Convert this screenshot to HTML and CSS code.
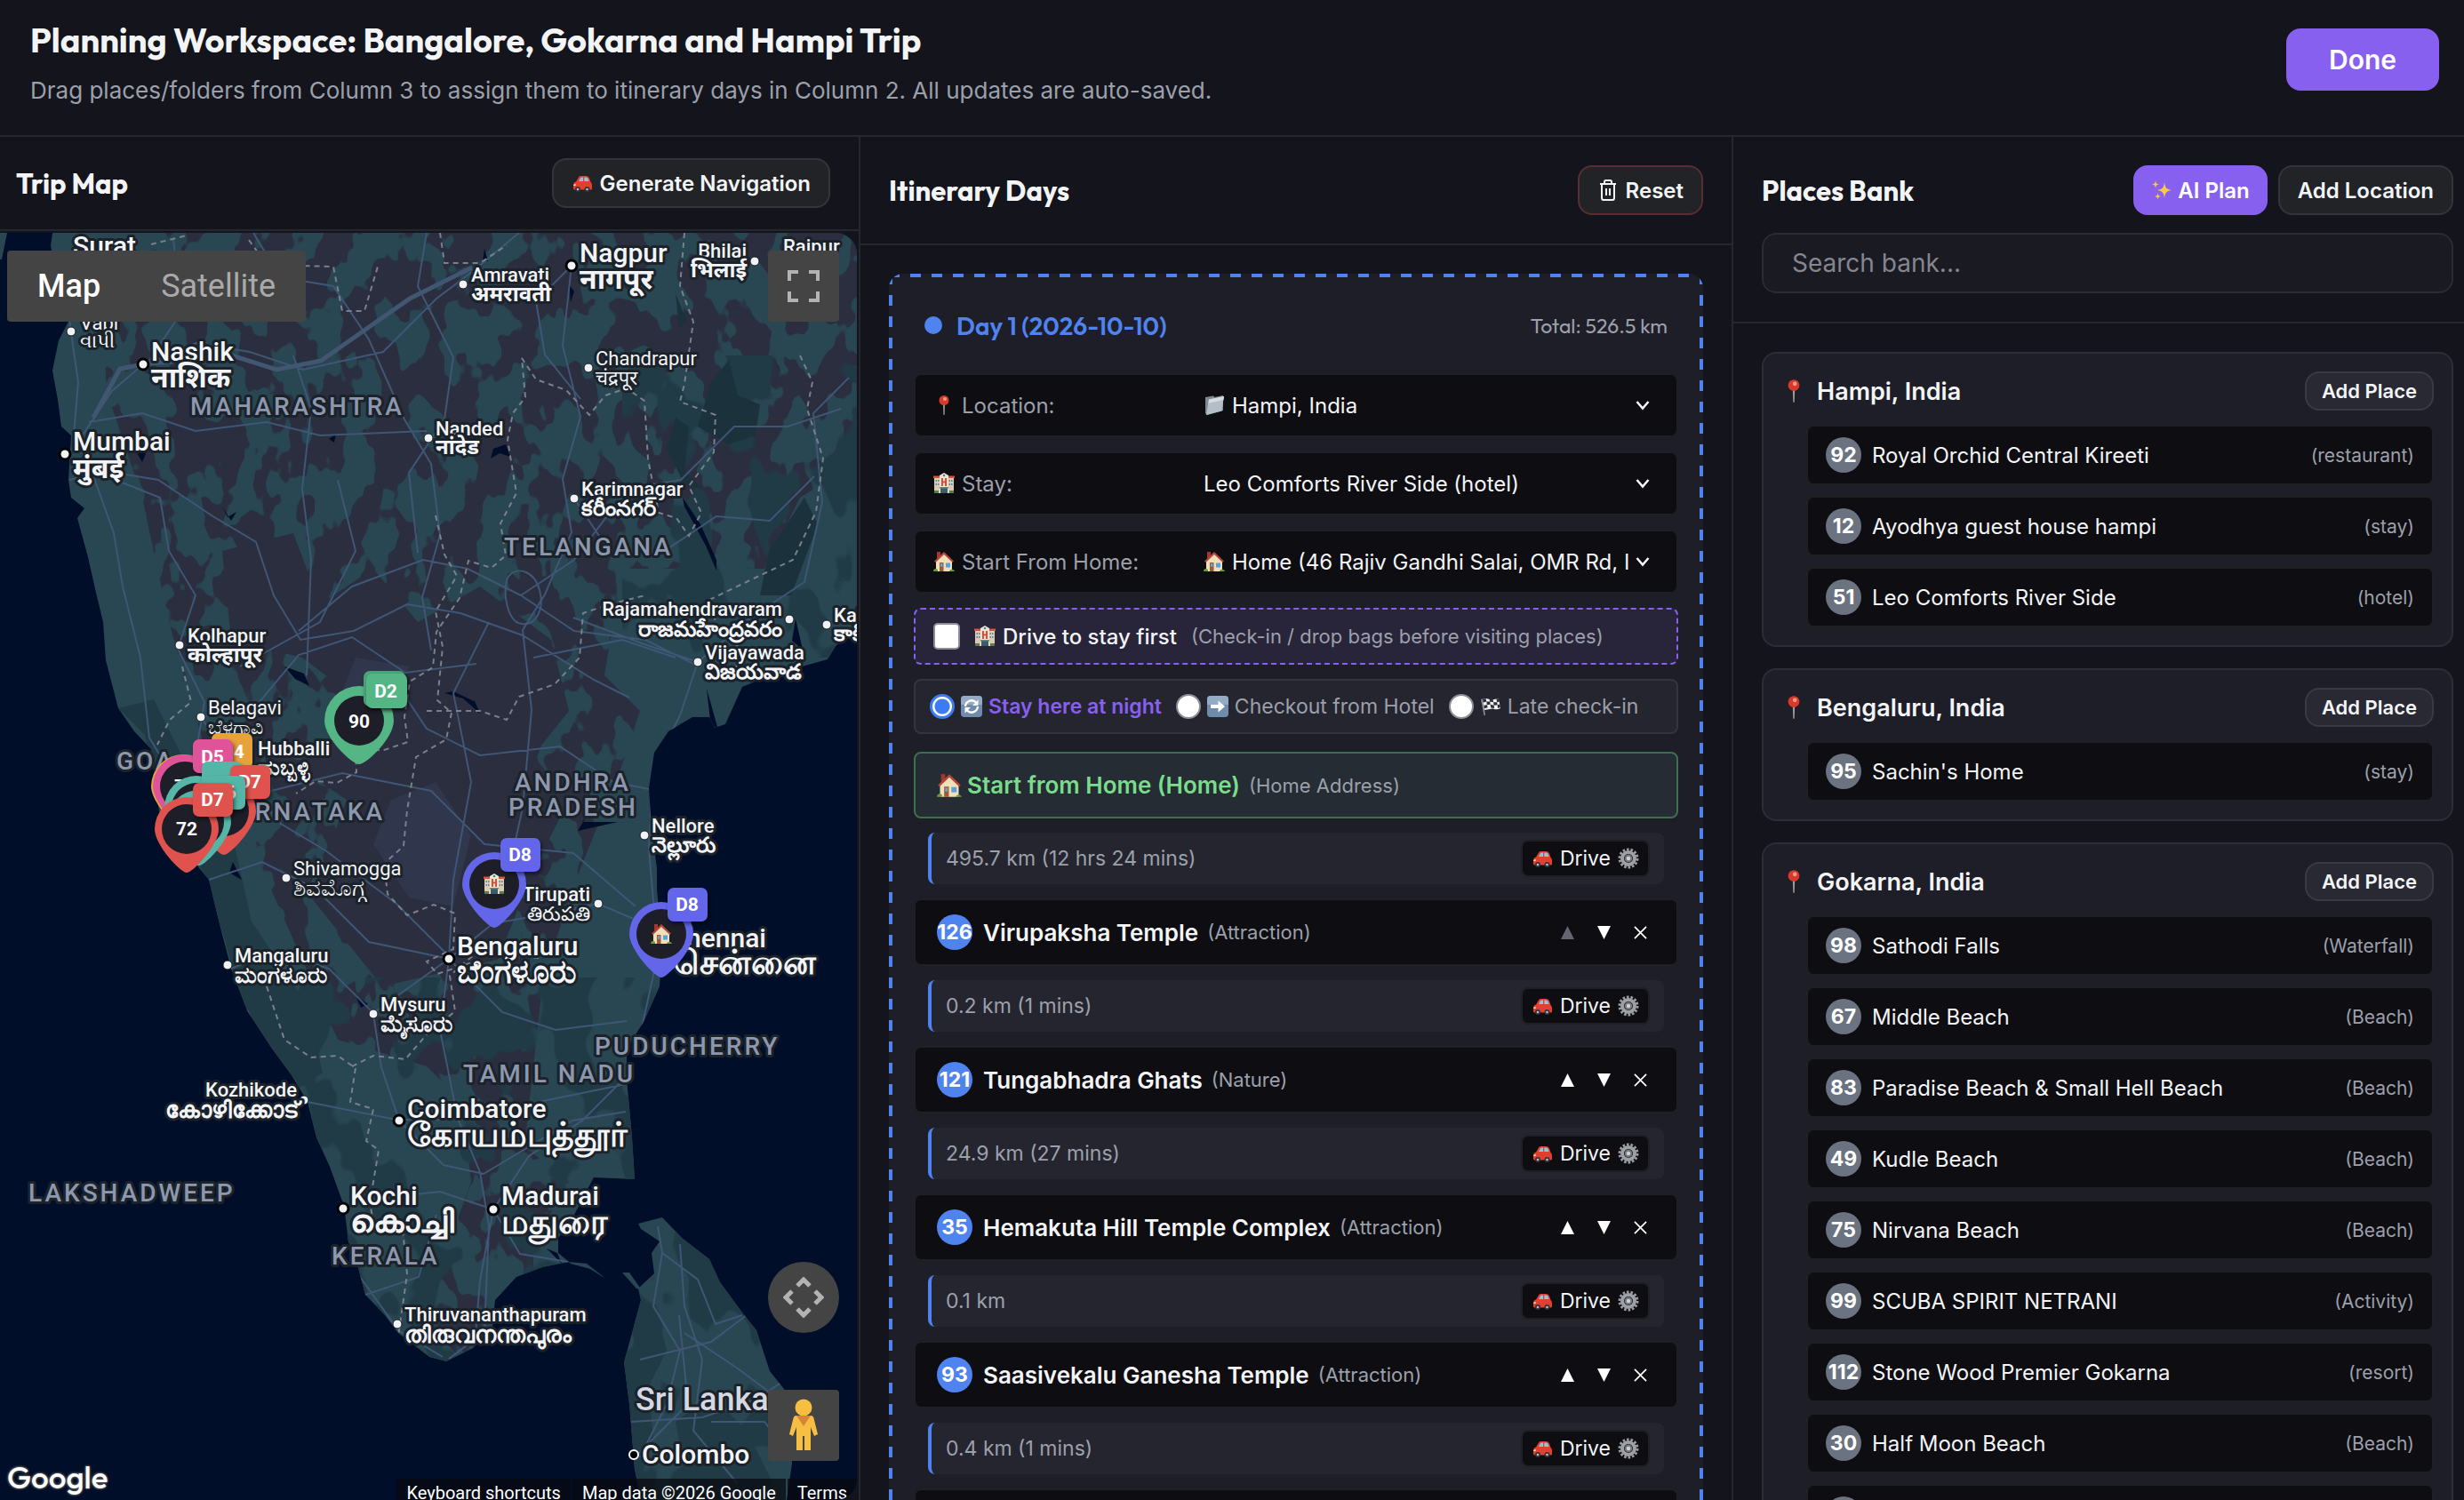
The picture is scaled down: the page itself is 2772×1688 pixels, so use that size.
FILE: index.html
```html
<!DOCTYPE html>
<html lang="en">
<head>
<meta charset="utf-8">
<title>Planning Workspace</title>
<link rel="stylesheet" href="styles.css">
</head>
<body>
<svg class="sprite" aria-hidden="true">
  <symbol id="i-car" viewBox="0 0 24 24">
    <path d="M2 15c0-3 1-4 3-4.500L8 5.500C8.500 4.500 9.500 4 11 4h5c2 0 3.500 1 4.200 3l1.300 4c1 .8 1.500 2 1.500 3.500V18c0 1-.6 1.500-1.500 1.500H4C2.700 19.500 2 19 2 17.500z" fill="#e0402f"/>
    <path d="M8 10l2-3.800c.3-.5.8-.7 1.500-.7H13V10zM14.300 5.500H16c1.300 0 2.200.6 2.700 1.800L19.500 10h-5.200z" fill="#8fc4d8"/>
    <circle cx="7" cy="19" r="3" fill="#33343a"/><circle cx="7" cy="19" r="1.300" fill="#b9bcc4"/>
    <circle cx="17.500" cy="19" r="3" fill="#33343a"/><circle cx="17.500" cy="19" r="1.300" fill="#b9bcc4"/>
    <path d="M2.600 13.500l2.400-.3-.6 1.800H2.200z" fill="#ffe9a8"/>
  </symbol>
  <symbol id="i-pin" viewBox="0 0 24 24">
    <path d="M11 11h2l-.4 12h-1.200z" fill="#a39a92"/>
    <circle cx="12" cy="6.500" r="5.500" fill="#d8392c"/><circle cx="13" cy="5" r="2" fill="#f39a8c"/>
  </symbol>
  <symbol id="i-folder" viewBox="0 0 24 24">
    <path d="M2 3l9-1.500L12.500 3 22 1v17L4 23l-2-2z" fill="#7e8994"/><path d="M6 5.500L23 2 20.500 18.500 3 23z" fill="#b4bec8"/><path d="M6 5.500L23 2 22.400 6 5.300 10z" fill="#d5dce2"/>
  </symbol>
  <symbol id="i-hotel" viewBox="0 0 24 24">
    <path d="M1 5h7v18H1zM16 5h7v18h-7z" fill="#d9cbb5"/><path d="M0 3.500h8V6H0zM16 3.500h8V6h-8z" fill="#d2573a"/>
    <path d="M7 3l5-3 5 3v20H7z" fill="#f1e6d4"/><circle cx="12" cy="3" r="1.300" fill="#4b7fa0"/>
    <path d="M9 6h1.900v3.400h2.200V6H15v9h-1.900v-3.800h-2.200V15H9z" fill="#e2452f"/>
    <path d="M2.500 8h1.500v2H2.500zM5 8h1.500v2H5zM2.500 12h1.500v2H2.500zM5 12h1.500v2H5zM17.500 8H19v2h-1.500zM20 8h1.500v2H20zM17.500 12H19v2h-1.500zM20 12h1.500v2H20z" fill="#6b8798"/>
    <path d="M8 17h8v6H8z" fill="#3d5c66"/><path d="M7 16h10v1.500H7z" fill="#5f8f80"/><path d="M1 20h5v3H1zM18 20h5v3h-5z" fill="#5c7d48"/>
  </symbol>
  <symbol id="i-home" viewBox="0 0 24 24">
    <path d="M4 1h4v7H4z" fill="#a4382e"/><path d="M3 11l9-8 9 8v12H3z" fill="#f0dfb8"/>
    <path d="M12 1l11 10.500-1.500 1.500L12 4 2.500 13 1 11.500z" fill="#b5473a"/>
    <path d="M7 13h4.500v10H7z" fill="#9b5b34"/><path d="M8 14.200h2.500v3.500H8z" fill="#6da7cf"/><path d="M14 13.500h5v5h-5z" fill="#5aa0dc"/>
    <path d="M0 23c0-3 3-4 5-2v2zM18 23c1-3 5-3 6 0z" fill="#6a9a3e"/>
  </symbol>
  <symbol id="i-cycle" viewBox="0 0 24 24">
    <rect width="24" height="24" rx="4" fill="#6f8cab"/><path d="M4 0h16a4 4 0 0 1 4 4v6H0V4a4 4 0 0 1 4-4" fill="#93abc4"/>
    <path d="M5 12a7 7 0 0 1 12-4.500M19 12a7 7 0 0 1-12 4.500" fill="none" stroke="#fff" stroke-width="2.400"/>
    <path d="M19.500 4.500V11h-6.500zM4.500 19.500V13H11z" fill="#fff"/>
  </symbol>
  <symbol id="i-right" viewBox="0 0 24 24">
    <rect width="24" height="24" rx="4" fill="#6f8cab"/><path d="M4 0h16a4 4 0 0 1 4 4v6H0V4a4 4 0 0 1 4-4" fill="#93abc4"/>
    <path d="M4 10h8.500V5.500L20 12l-7.500 6.500V14H4z" fill="#fff"/>
  </symbol>
  <symbol id="i-flag" viewBox="0 0 24 24">
    <path d="M1 4l2-.5L6 22H4.500z" fill="#8b8f96"/><path d="M3 4c5-3 8 2 13 0l5-1 2 11c-5 3-8-1-12 1l-6 1z" fill="#eef0f2"/>
    <path d="M3 4l3.500-1 .8 3.500-3.600 1zM10.500 3l4 1 .6 3.300-4-.8zM18.500 3.500l3-.5.6 3.500-3 .7zM7.300 6.500l3.800-.2.6 3.500-3.800.4zM15.100 7.300l4-.2.5 3.200-4 .4zM4.400 10.800l3.500-.6.7 3-3.600 1zM11.700 9.800l3.900.9.5 3.200-3.800-.5zM19.600 10.300l2.800-.8.5 3.500-2.800 1z" fill="#2c2e33"/>
  </symbol>
  <symbol id="i-spark" viewBox="0 0 24 24">
    <path d="M15 3c.8 6 2 8 8 9-6 1-7.200 3-8 9-.8-6-2-8-8-9 6-1 7.200-3 8-9zM5 1c.4 3 1 4 4 4.500C6 6 5.400 7 5 10 4.600 7 4 6 1 5.500 4 5 4.600 4 5 1zM7.500 15c.4 3 1 3.500 3.500 4-2.500.5-3.100 1-3.500 4-.4-3-1-3.500-3.500-4 2.500-.5 3.100-1 3.500-4z" fill="#fbc94a"/>
  </symbol>
  <symbol id="i-gear" viewBox="0 0 24 24">
    <circle cx="12" cy="12" r="10" fill="none" stroke="#9a9da3" stroke-width="3" stroke-dasharray="2.600 1.880"/>
    <circle cx="12" cy="12" r="7" fill="none" stroke="#9da0a6" stroke-width="4"/><circle cx="12" cy="12" r="4.400" fill="#77797f"/><circle cx="12" cy="12" r="2.200" fill="#d0d2d6"/>
  </symbol>
  <symbol id="i-chev" viewBox="0 0 16 12"><path d="M1.500 2L8 9.500 14.500 2" fill="none" stroke="#f3f4f6" stroke-width="2.600"/></symbol>
  <symbol id="i-up" viewBox="0 0 14 14"><path d="M7 0l7 14H0z" fill="currentColor"/></symbol>
  <symbol id="i-down" viewBox="0 0 14 14"><path d="M7 14L0 0h14z" fill="currentColor"/></symbol>
  <symbol id="i-x" viewBox="0 0 16 16"><path d="M1 1l14 14M15 1L1 15" fill="none" stroke="currentColor" stroke-width="1.800"/></symbol>
  <symbol id="i-trash" viewBox="0 0 20 24"><path d="M1 5h18M6 5V2.500C6 1.700 6.700 1 7.500 1h5c.8 0 1.500.7 1.500 1.500V5M3 5v15.500C3 22 3.800 23 5 23h10c1.200 0 2-1 2-2.500V5M8 10v8M12 10v8" fill="none" stroke="currentColor" stroke-width="2"/></symbol>
</svg>

<header class="topbar">
  <div>
    <h1>Planning Workspace: Bangalore, Gokarna and Hampi Trip</h1>
    <p>Drag places/folders from Column 3 to assign them to itinerary days in Column 2. All updates are auto-saved.</p>
  </div>
  <button class="done" type="button">Done</button>
</header>

<main class="columns">
  <section class="col col-map">
    <div class="map-head">
      <h2>Trip Map</h2>
      <button class="btn" type="button"><svg class="e"><use href="#i-car"/></svg>Generate Navigation</button>
    </div>
    <div class="map">
      <svg class="map-art" viewBox="0 262 964 1426" preserveAspectRatio="xMinYMin slice" role="img" aria-label="Map of southern India">
        <defs>
          <filter id="fields" x="0" y="0" width="100%" height="100%" color-interpolation-filters="sRGB">
            <feTurbulence type="fractalNoise" baseFrequency="0.026 0.017" numOctaves="3" seed="7"/>
            <feColorMatrix values="0 0 0 0 .165 0 0 0 0 .18 0 0 0 0 .247 40 0 0 0 -19.200"/>
          </filter>
          <filter id="forest" x="0" y="0" width="100%" height="100%" color-interpolation-filters="sRGB">
            <feTurbulence type="fractalNoise" baseFrequency="0.016 0.010" numOctaves="3" seed="21"/>
            <feColorMatrix values="0 0 0 0 .125 0 0 0 0 .23 0 0 0 0 .275 30 0 0 0 -16.500"/>
          </filter>
          <clipPath id="mainland"><path d="M59 262L57 277 77 362 66 383 59 417 65 450 69 480 80 490 77 540 80 560 95 572 87 583 99 627 108 667 116 700 119 743 133 797 151 823 170 843 179 913 210 960 235 990 247 1040 260 1090 278 1137 306 1180 328 1210 346 1240 356 1280 371 1313 387 1357 392 1397 402 1423 411 1457 433 1480 448 1500 483 1527 502 1532 532 1517 554 1493 557 1463 581 1437 610 1426 640 1420 628 1410 628 1393 646 1367 668 1325 714 1327 711 1280 705 1213 705 1180 724 1150 742 1110 745 1067 739 1000 739 977 733 933 730 887 736 847 752 823 779 807 798 807 804 819 816 815 835 773 866 760 931 742 940 727 964 708V262Z"/></clipPath>
          <clipPath id="lanka"><path d="M718 1377L745 1370 767 1393 798 1417 810 1443 835 1477 851 1497 866 1543 882 1563 891 1597 891 1647 885 1688H721L714 1653 708 1580 702 1533 711 1500 721 1463 718 1450 736 1433 733 1410 742 1397 721 1383Z"/></clipPath>
          <clipPath id="plateau"><path d="M110 262H964V520L900 560 860 640 700 640 680 760 720 800 700 860 640 1010 610 1110 590 1290 640 1330 600 1400 600 1440 560 1460 520 1530 490 1500 490 1440 530 1330 520 1240 480 1200 380 1170 340 1080 300 990 260 920 230 840 190 700 160 560 120 440Z"/></clipPath>
        </defs>
        <rect y="262" width="964" height="1426" fill="#000e29"/>
        <g clip-path="url(#mainland)">
          <rect y="262" width="964" height="1300" fill="#284752"/>
          <g clip-path="url(#plateau)">
            <path d="M250 620L330 600 360 680 420 640 470 700 540 660 620 720 640 800 600 850 640 900 600 980 560 1080 430 1110 350 1010 390 900 330 860 420 800 340 740 260 720Z" fill="#2a2e3f"/>
            <rect y="262" width="964" height="1300" filter="url(#fields)"/>
            <path d="M440 900l50-20 40 60-20 80-50-10-40-60zM400 740l60 10-20 60-60-20z" fill="#30364b"/>
          </g>
          <rect x="0" y="1100" width="964" height="440" filter="url(#forest)"/>
          <rect x="700" y="400" width="264" height="340" filter="url(#forest)"/>
          <path d="M133 797l30 30 20 90 40 50 30 90 20 80 60 90 30-20-20-80-60-90-20-90-60-100-30-60z" fill="#203b46"/>
          <path d="M800 430l20-25 10 40 25 10-5 35-30 10-35-20zM760 470l15 10-5 50 20 20-20-5-20-40zM905 560l-40 60-10 50 35 0 30-80zM760 330l12 30-8 10z" fill="#1b323d"/>
          <g fill="#000e29">
            <path d="M768 560l20 30 18 40v12l-12-28-24-44zM895 696l8 35-12-10zM795 775l14 50-10-14zM555 505l14-5 5 14-12-4-10 6zM250 570l6 12 10-6-6 10zM370 494l8-6-2 10zM500 780l35 10-25-12zM520 785l20 18-6-14zM655 925l40 0-45 10 12-20zM320 750l22 8 6 14-16-8zM545 280l4 14h-6zM640 320l6 8-4 12zM262 970l10 20-14-8zM160 500l5 8-5 12-8-14zM400 1120l14 10-8 4zM615 1405l12 5 5 12z"/>
          </g>
        </g>
        <path d="M0 262h8l-6 30H0zM640 1420l20 2 18 14 2 2-16-10-22-6zM700 1432l16 18 6 2-14-20z" fill="#284752"/>
        <g clip-path="url(#lanka)">
          <rect x="690" y="1360" width="220" height="328" fill="#284752"/>
          <rect x="690" y="1360" width="220" height="328" filter="url(#forest)"/>
          <path d="M715 1500l25-20 10 40-20 40 5 60-20 60-10-120zM760 1600l40-30 40 40 30 60-60 18-40-30z" fill="#203b46"/>
        </g>
        <g clip-path="url(#mainland)">
          <g class="roads">
            <path d="M78 360l10 70-5 60 20 40 25 70 10 60 20 80 10 90 30 50M86 500l40-60 35-30 60-24 60 10 60 20 90-20 60-60 40-30 60-50 50-30 130-8M100 475l60-10 60 20 80-10 60 15 120-5M78 540l40-10 60 10 60 40 50 30 20 60 30 50 60-10 60-30 60 10 70 25 80 50 40 20M130 540l50 20 10 60 30 50-20 60 30 60-10 60M165 410l40-60-10-80M285 262l30 50 60 10 40 60 40 90 30 50 10 80-20 70 10 60M330 400l20 60-10 90 10 80-5 130M480 262l-10 60 40 80-10 70-40 60 10 90M643 299l-10 90 20 80-20 70 10 60-30 70-25 40 10 90-10 110-20 90M643 299l-40 40 10 60 40 50M646 561l40 60 60 0 60-40 60 5 50-50M586 670l60-40 60-80 60-10 60-60 60 0 60-20M586 670l60 40 80 10 60 30M586 670l-60-30-50-10-80 30-60 50M600 740l100-20 60 20M785 745l-60-20-80-30M785 745l60-50 60-40 20-90-10-100 40-40M785 745l-20 60-30 60-5 90 10 120-20 90M226 807l60-10 50-60 60-20 60 40 80-10M226 807l40 60 50 60 50 30 80 60 60 60M205 880l100 10 80-20 100 20 60 60 100 10 70 60M235 990l60-20 60 30 60 60 90 19M260 1090l50-20 60 20 50 50 85-61M505 1079l50-40 60-10 58-12 70 30M505 1079l60 60 60 20 80-10M505 1079l-10 80 20 100 25 60 10 60-5 120-40 30M278 1137l30 60 30 80 40 60 20 90 50 70 50 30M346 1240l100 20 60 0 100-20 98-20M449 1261l50 50 45 10 100-60 60-10M449 1261l-20-60-9-60M555 1361l40-60 60-40 50-50M555 1361l30 50 60 10M555 1361l-60-20-90 10M555 1361l-15 80-5 60M411 1457l60-20 20-70M550 700l-40 80 20 100-20 110-5 89M440 760l40 60 60 30 90-10 60 40 50 10M380 540l20 80-40 80-90 50"/>
            <path d="M571 650c10-14 30-8 36 14s-4 40-20 38-22-34-16-52z"/>
          </g>
          <path class="roads wide" d="M105 470l30-55 26-5 100-10 50 16 50-10 100-70 70-35"/>
          <g class="borders">
            <path d="M170 275l40-10M280 270l20 28 75 2 10 50 25 0 15-50M495 262l5 34 40 0 30-20M770 262l-5 60 15 40-10 70-5 20 40 15-2 42-28 38 14 30-14 26-14-20-20-6-12-60-4-66-20-14-24 8-18 22-26-28-34-12-16-24 4 44-14 18-6 30 10 60-18 34 6 36-16 14-26-8-10 42-26 38-4 40-26 16-6 40 4 28-30 10-22-6-8-14 2 44-22 12-24-2-22 14"/>
            <path d="M900 400l14 30-6 30 18 56-8 60-26 54-42 20-50 24 6 32 34 30-20 24M490 580l10 44 14 24-24 40 8 40-6 60 16 14-6 30-34 20-10 60-4 40-22 20 4 34 22 24 30-12 24 10-2 40-30 14 12 14 36-12 18 10M480 800l60 0 30 10 14-26 40-14 28-30 4-50 30-10 40-10M205 750l10 40-24 20-14 28M300 1110l20 60 30 20 30-2 20 14-6 38 26 8-8 36 14 10-10 60 6 30 30-10 6 60-10 70M396 1200l24-12 36 4 26-30 30-24-6-40 30-26 70 6"/>
          </g>
        </g>
        <path class="roads" clip-path="url(#lanka)" d="M740 1380l5 30 40 30 20 50 30-10M745 1410l-10 60 30 50-15 60-30 60M714 1640l60-60-10-100M765 1400l5 70 20 60-10 80 50 60M720 1530l80-20 40-30M710 1600l80-5 60-20 30-20M770 1500l60 40 40 30M800 1600l60 0 30 40"/>
        <g class="dots">
          <circle cx="849" cy="294" r="5"/><circle cx="521" cy="320" r="5"/><circle cx="80" cy="373" r="5"/><circle cx="662" cy="414" r="5"/><circle cx="482" cy="493" r="5"/><circle cx="646" cy="561" r="5"/><circle cx="888" cy="697" r="5"/><circle cx="930" cy="703" r="5"/><circle cx="202" cy="726" r="5"/><circle cx="785" cy="745" r="5"/><circle cx="226" cy="807" r="5"/><circle cx="725" cy="940" r="5"/><circle cx="322" cy="988" r="5"/><circle cx="673" cy="1017" r="5"/><circle cx="256" cy="1086" r="5"/><circle cx="420" cy="1141" r="5"/><circle cx="342" cy="1238" r="5"/><circle cx="447" cy="1490" r="5"/>
          <g class="major"><circle cx="643" cy="299" r="6"/><circle cx="161" cy="410" r="6"/><circle cx="73" cy="511" r="6"/><circle cx="505" cy="1079" r="6"/><circle cx="449" cy="1261" r="6"/><circle cx="386" cy="1360" r="6"/><circle cx="555" cy="1361" r="6"/><circle cx="713" cy="1637" r="5" class="ring"/></g>
        </g>
        <g class="lbl state">
          <text x="214" y="467">MAHARASHTRA</text><text x="567" y="625">TELANGANA</text><text x="131" y="866">GOA</text><text x="433" y="923" text-anchor="end">KARNATAKA</text><text x="579" y="890">ANDHRA</text><text x="572" y="918">PRADESH</text><text x="669" y="1187">PUDUCHERRY</text><text x="521" y="1218">TAMIL NADU</text><text x="32" y="1352">LAKSHADWEEP</text><text x="373" y="1423">KERALA</text>
        </g>
        <g class="lbl city">
          <text x="82" y="287">Surat</text><text x="652" y="295">Nagpur</text><text x="652" y="325" class="hi">नागपूर</text><text x="170" y="406">Nashik</text><text x="170" y="436" class="hi">नाशिक</text><text x="82" y="507">Mumbai</text><text x="82" y="538" class="hi">मुंबई</text><text x="514" y="1075">Bengaluru</text><text x="514" y="1106" class="dr">ಬೆಂಗಳೂರು</text><text x="862" y="1066" text-anchor="end">Chennai</text><text x="757" y="1096" class="ta">சென்னை</text><text x="458" y="1258">Coimbatore</text><text x="458" y="1290" class="ta">கோயம்புத்தூர்</text><text x="394" y="1356">Kochi</text><text x="394" y="1387" class="dr">കൊച്ചി</text><text x="564" y="1356">Madurai</text><text x="564" y="1388" class="ta">மதுரை</text><text x="722" y="1647">Colombo</text>
        </g>
        <g class="lbl town">
          <text x="840" y="290" text-anchor="end">Bhilai</text><text x="840" y="312" text-anchor="end" class="hi">भिलाई</text><text x="881" y="285">Raipur</text><text x="530" y="317">Amravati</text><text x="530" y="339" class="hi">अमरावती</text><text x="490" y="490">Nanded</text><text x="490" y="511" class="hi">नांदेड</text><text x="654" y="558">Karimnagar</text><text x="654" y="580" class="hi">కరీంనగర్</text><text x="880" y="693" text-anchor="end">Rajamahendravaram</text><text x="880" y="716" text-anchor="end" class="hi">రాజమహేంద్రవరం</text><text x="938" y="700">Kakinada</text><text x="938" y="721" class="hi">కాకినాడ</text><text x="211" y="723">Kolhapur</text><text x="211" y="745" class="hi">कोल्हापूर</text><text x="793" y="742">Vijayawada</text><text x="793" y="764" class="hi">విజయవాడ</text><text x="290" y="850">Hubballi</text><text x="290" y="872" class="hi">ಹುಬ್ಬಳ್ಳಿ</text><text x="733" y="937">Nellore</text><text x="733" y="959" class="hi">నెల్లూరు</text><text x="664" y="1014" text-anchor="end">Tirupati</text><text x="664" y="1036" text-anchor="end">తిరుపతి</text><text x="264" y="1083">Mangaluru</text><text x="264" y="1106" class="dr">ಮಂಗಳೂರು</text><text x="428" y="1138">Mysuru</text><text x="428" y="1161" class="dr">ಮೈಸೂರು</text><text x="334" y="1234" text-anchor="end">Kozhikode</text><text x="336" y="1258" text-anchor="end" class="dr">കോഴിക്കോട്</text><text x="455" y="1487">Thiruvananthapuram</text><text x="455" y="1511" class="dr">തിരുവനന്തപുരം</text>
        </g>
        <g class="lbl town thin">
          <text x="90" y="371">Vapi</text><text x="90" y="391">વાપી</text><text x="670" y="411">Chandrapur</text><text x="670" y="433">चंद्रपूर</text><text x="234" y="804">Belagavi</text><text x="234" y="826">ಬೆಳಗಾವಿ</text><text x="330" y="985">Shivamogga</text><text x="330" y="1008" class="dr">ಶಿವಮೊಗ್ಗ</text>
        </g>
        <g class="lbl nation"><text x="715" y="1587">Sri Lanka</text></g>

        <g class="pins">
          <g transform="translate(206 885)"><path d="M0 49C-7 49-36 18-36 0A36 36 0 0 1 36 0C36 18 7 49 0 49Z" fill="#e8a23c"/><circle r="28"/><rect x="32" y="-60" width="46" height="40" rx="7" fill="#e8a23c"/><text x="56" y="-32">D4</text></g>
          <g transform="translate(208 885)"><path d="M0 49C-7 49-36 18-36 0A36 36 0 0 1 36 0C36 18 7 49 0 49Z" fill="#df5499"/><circle r="28"/><text y="7">70</text><rect x="9" y="-53" width="45" height="38" rx="7" fill="#df5499"/><text x="31" y="-26">D5</text></g>
          <g transform="translate(221 909)"><path d="M0 49C-7 49-36 18-36 0A36 36 0 0 1 36 0C36 18 7 49 0 49Z" fill="#55b5a6"/><circle r="28"/><rect x="6" y="-52" width="45" height="38" rx="7" fill="#55b5a6"/></g>
          <g transform="translate(252 913)"><path d="M0 49C-7 49-36 18-36 0A36 36 0 0 1 36 0C36 18 7 49 0 49Z" fill="#df524d"/><circle r="28"/><rect x="7" y="-52" width="45" height="38" rx="7" fill="#df524d"/><text x="29" y="-26">D7</text></g>
          <g transform="translate(224 925)"><path d="M0 49C-7 49-36 18-36 0A36 36 0 0 1 36 0C36 18 7 49 0 49Z" fill="#55b5a6"/><circle r="28"/><rect x="7" y="-52" width="45" height="38" rx="7" fill="#55b5a6"/><text x="29" y="-26">D6</text></g>
          <g transform="translate(210 933)"><path d="M0 49C-7 49-36 18-36 0A36 36 0 0 1 36 0C36 18 7 49 0 49Z" fill="#df524d"/><circle r="28"/><text y="7">72</text><rect x="7" y="-52" width="45" height="38" rx="7" fill="#df524d"/><text x="29" y="-26">D7</text></g>
          <g transform="translate(404 811)"><path d="M0 49C-8 49-39 20-39 0A39 39 0 0 1 39 0C39 20 8 49 0 49Z" fill="#54b685"/><circle r="28"/><text y="8">90</text><rect x="5" y="-56" width="47" height="40" rx="7" fill="#48a577"/><rect x="8" y="-53" width="46" height="39" rx="7" fill="#54b685"/><text x="30" y="-26">D2</text></g>
          <g transform="translate(556 995)"><path d="M0 49C-7 49-36 18-36 0A36 36 0 0 1 36 0C36 18 7 49 0 49Z" fill="#6366e8"/><circle r="28"/><use href="#i-hotel" x="-12" y="-12" width="24" height="24"/><rect x="7" y="-52" width="45" height="38" rx="7" fill="#6366e8"/><text x="29" y="-26">D8</text></g>
          <g transform="translate(744 1051)"><path d="M0 49C-7 49-36 18-36 0A36 36 0 0 1 36 0C36 18 7 49 0 49Z" fill="#6366e8"/><circle r="28"/><use href="#i-home" x="-12" y="-12" width="24" height="24"/><rect x="7" y="-52" width="45" height="38" rx="7" fill="#6366e8"/><text x="29" y="-26">D8</text></g>
        </g>
      </svg>
      <div class="map-type"><button type="button" class="on">Map</button><button type="button">Satellite</button></div>
      <button class="map-tool full" type="button" aria-label="Toggle fullscreen"><svg width="36" height="36" viewBox="0 0 36 36"><path d="M2 12V2h10M24 2h10v10M34 24v10H24M12 34H2V24" fill="none" stroke="#b3b3b3" stroke-width="4"/></svg></button>
      <button class="map-tool pan" type="button" aria-label="Camera controls"><svg width="46" height="46" viewBox="0 0 46 46"><path d="M16 10l7-7 7 7M16 36l7 7 7-7M10 16l-7 7 7 7M36 16l7 7-7 7" fill="none" stroke="#b3b3b3" stroke-width="5"/></svg></button>
      <button class="map-tool peg" type="button" aria-label="Street View"><svg width="34" height="60" viewBox="0 0 34 60"><circle cx="17" cy="10" r="9.500" fill="#f6bf42"/><path d="M9 19h16c2 0 3 1 3.500 3L33 40l-4 2-4-10v26h-7V42h-2v16H9V32L5 42l-4-2 4.500-18C6 20 7 19 9 19z" fill="#f6bf42"/><path d="M9 19h16l-8 12z" fill="#d9843b"/></svg></button>
      <a class="google" href="#">Google</a>
      <div class="map-legal"><button type="button">Keyboard shortcuts</button><span>Map data ©2026 Google</span><a href="#">Terms</a></div>
    </div>
  </section>

  <section class="col col-days">
    <div class="days-head">
      <h2>Itinerary Days</h2>
      <button class="btn danger" type="button"><svg class="e"><use href="#i-trash"/></svg>Reset</button>
    </div>
    <div class="days-body">
      <article class="day">
        <header class="day-head"><span class="day-dot"></span><h3>Day 1 (2026-10-10)</h3><span class="total">Total: 526.5 km</span></header>
        <div class="field"><label for="loc"><svg class="e"><use href="#i-pin"/></svg>Location:</label><div class="pick"><svg class="e"><use href="#i-folder"/></svg><select id="loc"><option>Hampi, India</option></select><svg class="chev"><use href="#i-chev"/></svg></div></div>
        <div class="field"><label for="stay"><svg class="e"><use href="#i-hotel"/></svg>Stay:</label><div class="pick"><select id="stay"><option>Leo Comforts River Side (hotel)</option></select><svg class="chev"><use href="#i-chev"/></svg></div></div>
        <div class="field"><label for="home"><svg class="e"><use href="#i-home"/></svg>Start From Home:</label><div class="pick"><svg class="e"><use href="#i-home"/></svg><select id="home"><option>Home (46 Rajiv Gandhi Salai, OMR Rd, Injambakkam)</option></select><svg class="chev"><use href="#i-chev"/></svg></div></div>
        <label class="stay-first"><input type="checkbox"><svg class="e"><use href="#i-hotel"/></svg><b>Drive to stay first</b><span>(Check-in / drop bags before visiting places)</span></label>
        <div class="night">
          <label class="sel"><input type="radio" name="night" checked><svg class="e"><use href="#i-cycle"/></svg>Stay here at night</label>
          <label><input type="radio" name="night"><svg class="e"><use href="#i-right"/></svg>Checkout from Hotel</label>
          <label><input type="radio" name="night"><svg class="e"><use href="#i-flag"/></svg>Late check-in</label>
        </div>
        <div class="start"><svg class="e big"><use href="#i-home"/></svg><b>Start from Home (Home)</b><span>(Home Address)</span></div>
        <div class="leg"><span>495.7 km (12 hrs 24 mins)</span><button type="button"><svg class="e"><use href="#i-car"/></svg>Drive<svg class="e"><use href="#i-gear"/></svg></button></div>
        <div class="stop"><i>126</i><b>Virupaksha Temple</b><span>(Attraction)</span><div class="acts"><button type="button" aria-label="Up" disabled><svg><use href="#i-up"/></svg></button><button type="button" aria-label="Down"><svg><use href="#i-down"/></svg></button><button type="button" aria-label="Remove"><svg><use href="#i-x"/></svg></button></div></div>
        <div class="leg"><span>0.2 km (1 mins)</span><button type="button"><svg class="e"><use href="#i-car"/></svg>Drive<svg class="e"><use href="#i-gear"/></svg></button></div>
        <div class="stop"><i>121</i><b>Tungabhadra Ghats</b><span>(Nature)</span><div class="acts"><button type="button" aria-label="Up"><svg><use href="#i-up"/></svg></button><button type="button" aria-label="Down"><svg><use href="#i-down"/></svg></button><button type="button" aria-label="Remove"><svg><use href="#i-x"/></svg></button></div></div>
        <div class="leg"><span>24.9 km (27 mins)</span><button type="button"><svg class="e"><use href="#i-car"/></svg>Drive<svg class="e"><use href="#i-gear"/></svg></button></div>
        <div class="stop"><i>35</i><b>Hemakuta Hill Temple Complex</b><span>(Attraction)</span><div class="acts"><button type="button" aria-label="Up"><svg><use href="#i-up"/></svg></button><button type="button" aria-label="Down"><svg><use href="#i-down"/></svg></button><button type="button" aria-label="Remove"><svg><use href="#i-x"/></svg></button></div></div>
        <div class="leg"><span>0.1 km</span><button type="button"><svg class="e"><use href="#i-car"/></svg>Drive<svg class="e"><use href="#i-gear"/></svg></button></div>
        <div class="stop"><i>93</i><b>Saasivekalu Ganesha Temple</b><span>(Attraction)</span><div class="acts"><button type="button" aria-label="Up"><svg><use href="#i-up"/></svg></button><button type="button" aria-label="Down"><svg><use href="#i-down"/></svg></button><button type="button" aria-label="Remove"><svg><use href="#i-x"/></svg></button></div></div>
        <div class="leg"><span>0.4 km (1 mins)</span><button type="button"><svg class="e"><use href="#i-car"/></svg>Drive<svg class="e"><use href="#i-gear"/></svg></button></div>
        <div class="stop"></div>
      </article>
    </div>
  </section>

  <section class="col col-bank">
    <div class="bank-head">
      <div class="bank-title"><h2>Places Bank</h2><button class="btn primary" type="button"><svg class="e"><use href="#i-spark"/></svg>AI Plan</button><button class="btn" type="button">Add Location</button></div>
      <input class="search" type="search" placeholder="Search bank..." aria-label="Search bank">
    </div>
    <div class="bank-body">
      <article class="folder">
        <header><svg class="e big"><use href="#i-pin"/></svg><h3>Hampi, India</h3><button type="button">Add Place</button></header>
        <ul>
          <li><i>92</i><b>Royal Orchid Central Kireeti</b><span>(restaurant)</span></li>
          <li><i>12</i><b>Ayodhya guest house hampi</b><span>(stay)</span></li>
          <li><i>51</i><b>Leo Comforts River Side</b><span>(hotel)</span></li>
        </ul>
      </article>
      <article class="folder">
        <header><svg class="e big"><use href="#i-pin"/></svg><h3>Bengaluru, India</h3><button type="button">Add Place</button></header>
        <ul><li><i>95</i><b>Sachin's Home</b><span>(stay)</span></li></ul>
      </article>
      <article class="folder">
        <header><svg class="e big"><use href="#i-pin"/></svg><h3>Gokarna, India</h3><button type="button">Add Place</button></header>
        <ul>
          <li><i>98</i><b>Sathodi Falls</b><span>(Waterfall)</span></li>
          <li><i>67</i><b>Middle Beach</b><span>(Beach)</span></li>
          <li><i>83</i><b>Paradise Beach &amp; Small Hell Beach</b><span>(Beach)</span></li>
          <li><i>49</i><b>Kudle Beach</b><span>(Beach)</span></li>
          <li><i>75</i><b>Nirvana Beach</b><span>(Beach)</span></li>
          <li><i>99</i><b>SCUBA SPIRIT NETRANI</b><span>(Activity)</span></li>
          <li><i>112</i><b>Stone Wood Premier Gokarna</b><span>(resort)</span></li>
          <li><i>30</i><b>Half Moon Beach</b><span>(Beach)</span></li>
          <li><i></i></li>
        </ul>
      </article>
    </div>
  </section>
</main>
</body>
</html>
```
FILE: styles.css
```css
:root {
  --bg: #14141c;
  --card: #1e1e29;
  --row: #0d0d12;
  --line: #26262e;
  --text: #f3f4f6;
  --muted: #9ca0ab;
  --blue: #4f83f0;
  --purple: #8860f0;
}

* { box-sizing: border-box; }

body {
  margin: 0;
  height: 100vh;
  display: flex;
  flex-direction: column;
  overflow: hidden;
  background: var(--bg);
  color: var(--text);
  font-family: Inter, sans-serif;
  font-size: 24px;
}

h1, h2, h3, p, ul { margin: 0; padding: 0; }
h1, h2, .day h3, .total { font-family: Outfit, Lato, sans-serif; }
h2 { font-size: 31px; font-weight: 700; flex: 1; }
button, input, select { font: inherit; color: inherit; }
button { cursor: pointer; }
b { font-weight: 600; }
i { font-style: normal; }
.sprite { position: absolute; width: 0; height: 0; }
.e { width: 24px; height: 24px; flex: none; }
.e.big { width: 28px; height: 28px; }

/* top bar */
.topbar {
  display: flex;
  justify-content: space-between;
  align-items: flex-start;
  padding: 20px 28px 30px 34px;
  border-bottom: 2px solid var(--line);
}
.topbar h1 { font-size: 38px; line-height: 50px; font-weight: 700; }
.topbar p { margin-top: 12px; font-size: 26px; line-height: 40px; color: var(--muted); }
.done {
  margin-top: 12px;
  height: 70px;
  padding: 0 48px;
  border: 0;
  border-radius: 16px;
  background: var(--purple);
  color: #fff;
  font-size: 30px;
  font-weight: 600;
}

.columns {
  flex: 1;
  min-height: 0;
  display: grid;
  grid-template-columns: 968fr 982fr 822fr;
}
.col { min-width: 0; min-height: 0; display: flex; flex-direction: column; overflow: hidden; }
.col-map, .col-days { border-right: 2px solid var(--line); }

.btn {
  height: 56px;
  padding: 0 20px;
  display: flex;
  align-items: center;
  gap: 8px;
  border: 2px solid #34353a;
  border-radius: 16px;
  background: #222327;
  font-size: 24px;
  font-weight: 600;
}
.btn.danger { border-color: #5a2d33; }
.btn.primary { gap: 6px; padding: 0 18px; border-color: var(--purple); background: var(--purple); color: #fff; }

/* map */
.map-head { display: flex; align-items: center; padding: 24px 32px 24px 18px; border-bottom: 2px solid var(--line); }
.map { position: relative; flex: 1; min-height: 0; margin-top: 2px; margin-right: 2px; border-radius: 0 24px 24px 0; overflow: hidden; background: #000e29; }
.map-art { display: block; width: 100%; height: 100%; }
.roads { fill: none; stroke: #3f5674; stroke-width: 2; }
.roads.wide { stroke-width: 5; stroke: #405671; }
.borders { fill: none; stroke: #78808b; stroke-width: 2; stroke-dasharray: 6 5; }
.dots circle { fill: #f1f2f6; stroke: #15171c; stroke-width: 1; }
.dots .major circle { stroke: #000; stroke-width: 3; }
.dots .major .ring { fill: #000; stroke: #fff; stroke-width: 2; }
.lbl { fill: #f3f4f8; stroke: #1b2229; stroke-width: 6; stroke-linejoin: round; paint-order: stroke; font-family: Roboto, "Noto Sans", sans-serif; font-weight: 500; }
.state { font-size: 28px; letter-spacing: 3px; fill: #8d97ad; }
.city { font-size: 30px; }
.city .hi { font-size: 32px; font-weight: 700; }
.city .dr { font-size: 36px; font-weight: 700; }
.city .ta { font-size: 38px; font-weight: 700; }
.town { font-size: 22px; }
.town .hi { font-size: 24px; }
.town .dr { font-size: 26px; }
.town:not(.thin) .hi, .town:not(.thin) .dr { font-weight: 700; }
.thin { font-weight: 400; }
.nation { font-size: 36px; fill: #d5d8e0; }
.pins circle { fill: #1e1e29; }
.pins text { fill: #fff; font-family: Roboto, sans-serif; font-size: 21px; font-weight: 700; text-anchor: middle; }
.pins rect { filter: drop-shadow(2px 3px 2px rgba(0, 0, 0, .5)); }
.map-type { position: absolute; left: 8px; top: 20px; display: flex; height: 80px; border-radius: 4px; overflow: hidden; background: #444; }
.map-type button { padding: 0 34px; border: 0; background: none; font-family: Roboto, sans-serif; font-size: 36px; color: #aaa; }
.map-type .on { color: #fff; font-weight: 500; }
.map-tool { position: absolute; right: 20px; width: 80px; height: 80px; padding: 0; display: grid; place-items: center; border: 0; border-radius: 4px; background: #444; }
.full { top: 20px; }
.pan { bottom: 188px; border-radius: 50%; }
.peg { bottom: 44px; }
.google { position: absolute; left: 8px; bottom: 4px; color: #fff; font-family: Outfit, Lato, sans-serif; font-size: 35px; font-weight: 500; line-height: 44px; text-decoration: none; text-shadow: 0 0 3px #555, 0 0 3px #555, 0 0 3px #555; }
.map-legal { position: absolute; right: 0; bottom: -6px; display: flex; gap: 2px; font-family: Roboto, sans-serif; font-size: 20px; line-height: 28px; }
.map-legal > * { padding: 2px 11px 0; border: 0; background: rgba(8, 10, 16, .75); color: #fff; text-decoration: none; }

/* itinerary */
.days-head { display: flex; align-items: center; padding: 32px; border-bottom: 2px solid var(--line); }
.days-body { flex: 1; min-height: 0; overflow: hidden; padding: 32px; }
.day {
  --dash: var(--blue) 0 12px, transparent 12px 24px;
  padding: 24px;
  border: 4px solid transparent;
  border-radius: 16px;
  background:
    repeating-linear-gradient(90deg, var(--dash)) top / 100% 4px no-repeat border-box,
    repeating-linear-gradient(90deg, var(--dash)) bottom / 100% 4px no-repeat border-box,
    repeating-linear-gradient(180deg, var(--dash)) left / 4px 100% no-repeat border-box,
    repeating-linear-gradient(180deg, var(--dash)) right / 4px 100% no-repeat border-box,
    linear-gradient(var(--card), var(--card)) border-box;
}
.day-head { display: flex; align-items: center; height: 60px; padding: 0 12px; margin-bottom: 24px; }
.day-dot { width: 20px; height: 20px; border-radius: 50%; background: var(--blue); margin-right: 16px; }
.day h3 { flex: 1; font-size: 28px; font-weight: 600; color: var(--blue); }
.total { font-size: 23px; color: var(--muted); }
.field, .stop { border: 2px solid #1f1f24; border-radius: 8px; background: var(--row); }
.field { display: flex; align-items: center; height: 72px; margin-bottom: 16px; padding: 0 20px; color: var(--muted); }
.field label { display: flex; align-items: center; gap: 8px; flex: 0 0 304px; }
.pick { flex: 1; min-width: 0; display: flex; align-items: center; gap: 8px; color: var(--text); padding-right: 10px; }
.pick select { flex: 1; min-width: 0; padding: 0; border: 0; background: none; appearance: none; outline: 0; }
.chev { width: 16px; height: 12px; flex: none; }
.stay-first { display: flex; align-items: center; height: 64px; margin-bottom: 16px; padding: 0 20px; border: 2px dashed var(--purple); border-radius: 8px; background: #28243a; }
.stay-first b { margin: 0 16px 0 8px; font-weight: 500; }
.stay-first span { font-size: 22px; color: var(--muted); }
.stay-first input { width: 30px; height: 30px; margin: 0 16px 0 0; appearance: none; border: 2px solid #8e8d97; border-radius: 5px; background: #fff; }
.night { display: flex; align-items: center; gap: 16px; height: 62px; margin-bottom: 20px; padding: 0 16px; border: 2px solid #34343f; border-radius: 8px; background: #252530; color: var(--muted); font-size: 23px; white-space: nowrap; }
.night label { display: flex; align-items: center; gap: 7px; }
.night .sel { color: var(--purple); font-weight: 600; }
.night input { width: 28px; height: 28px; margin: 0; appearance: none; border: 2px solid #8e8d97; border-radius: 50%; background: #fff; }
.night input:checked { border: 3px solid #3b7cf5; background: radial-gradient(circle, #3b7cf5 8px, #fff 9px); }
.start { display: flex; align-items: center; height: 75px; margin-bottom: 16px; padding: 0 24px; border: 2px solid #3d704f; border-radius: 8px; background: #252c33; }
.start b { margin: 0 10px 0 6px; font-size: 26px; color: #79dd8b; }
.start span { font-size: 22px; color: var(--muted); }
.leg { display: flex; align-items: center; justify-content: space-between; height: 58px; margin: 0 16px 16px; padding: 0 16px; border-left: 4px solid var(--blue); border-radius: 8px; background: #252530; color: var(--muted); font-size: 23px; }
.leg button { display: flex; align-items: center; gap: 8px; height: 42px; padding: 0 10px; border: 2px solid #1f1f24; border-radius: 8px; background: var(--row); color: var(--text); }
.stop { display: flex; align-items: center; height: 76px; margin-bottom: 16px; padding: 0 24px; }
.stop i, .folder i { width: 40px; height: 40px; flex: none; display: grid; place-items: center; border-radius: 50%; background: var(--blue); color: #fff; font-size: 23px; font-weight: 700; }
.stop b { margin: 0 10px 0 12px; font-size: 26px; }
.stop span { flex: 1; font-size: 22px; color: var(--muted); }
.acts { display: flex; gap: 1px; margin-right: -3px; }
.acts button { width: 40px; height: 40px; padding: 0; display: grid; place-items: center; border: 0; background: none; color: #fff; }
.acts button:disabled { color: #62656f; }
.acts svg { width: 15px; height: 15px; }

/* bank */
.bank-head { padding: 32px 12px 32px 32px; border-bottom: 2px solid var(--line); }
.bank-title { display: flex; align-items: center; gap: 12px; margin-bottom: 20px; }
.search { display: block; width: 100%; height: 68px; padding: 0 32px; border: 2px solid #2b2b35; border-radius: 16px; background: #1a1a23; outline: 0; font-size: 28px; }
.search::placeholder { color: #85868e; }
.bank-body { flex: 1; min-height: 0; overflow: hidden; padding: 32px 12px 0 32px; display: flex; flex-direction: column; gap: 24px; }
.folder { flex: none; padding: 20px; border: 2px solid #2d2d38; border-radius: 16px; background: var(--card); }
.folder header { display: flex; align-items: center; height: 44px; margin-bottom: 16px; }
.folder h3 { flex: 1; margin-left: 12px; font-size: 27px; font-weight: 600; }
.folder header button { height: 44px; padding: 0 17px; border: 2px solid #3a3a45; border-radius: 16px; background: #292934; font-size: 22px; font-weight: 600; }
.folder ul { list-style: none; padding-left: 28px; display: grid; gap: 12px; }
.folder li { display: flex; align-items: center; height: 68px; padding: 0 20px; border: 2px solid #1f1f24; border-radius: 8px; background: var(--row); }
.folder i { background: #6b7280; }
.folder li b { flex: 1; margin-left: 12px; font-size: 24px; font-weight: 400; }
.folder li span { font-size: 21px; color: var(--muted); }
```
